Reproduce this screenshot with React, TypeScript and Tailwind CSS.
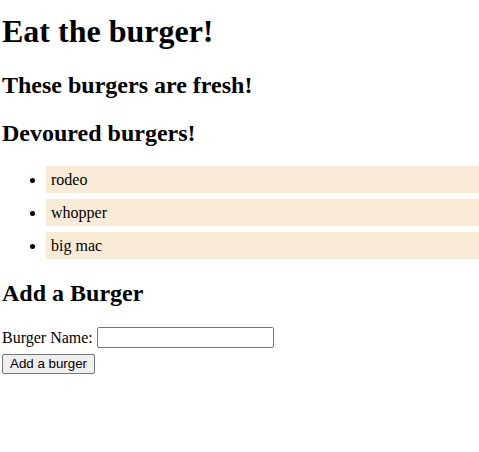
export default function App() {
  const devoured = ["rodeo", "whopper", "big mac"];

  return (
    <div className="min-h-[452px] bg-white pl-[2px] pt-[13px] text-[16px] text-black font-['Liberation_Serif','Times_New_Roman',serif]">
      <h1 className="mb-[22px] text-[32px] font-bold leading-[36px]">Eat the burger!</h1>
      <h2 className="mb-[20px] text-[24px] font-bold leading-[28px]">These burgers are fresh!</h2>
      <h2 className="mb-[19px] text-[24px] font-bold leading-[28px]">Devoured burgers!</h2>

      <ul className="list-disc pl-[44px]">
        {devoured.map((name) => (
          <li key={name} className="mb-[6px] h-[27px] bg-[#faebd7] pl-[5px] leading-[27px]">
            {name}
          </li>
        ))}
      </ul>

      <h2 className="mt-[20px] mb-[20px] text-[24px] font-bold leading-[28px]">Add a Burger</h2>

      <form onSubmit={(e) => e.preventDefault()}>
        <div className="flex h-[21px] items-center gap-[4px]">
          <label htmlFor="burger" className="leading-[18px]">Burger Name:</label>
          <input
            id="burger"
            type="text"
            className="h-[21px] w-[177px] rounded-[2px] border border-[#767676] bg-white px-[2px] text-[13.33px] font-['Liberation_Sans',Arial,sans-serif]"
          />
        </div>
        <button
          type="submit"
          className="mt-[6px] h-[20px] rounded-[2px] border border-[#767676] bg-[#efefef] px-[7px] text-[13.33px] leading-[16px] text-black font-['Liberation_Sans',Arial,sans-serif]"
        >
          Add a burger
        </button>
      </form>
    </div>
  );
}
